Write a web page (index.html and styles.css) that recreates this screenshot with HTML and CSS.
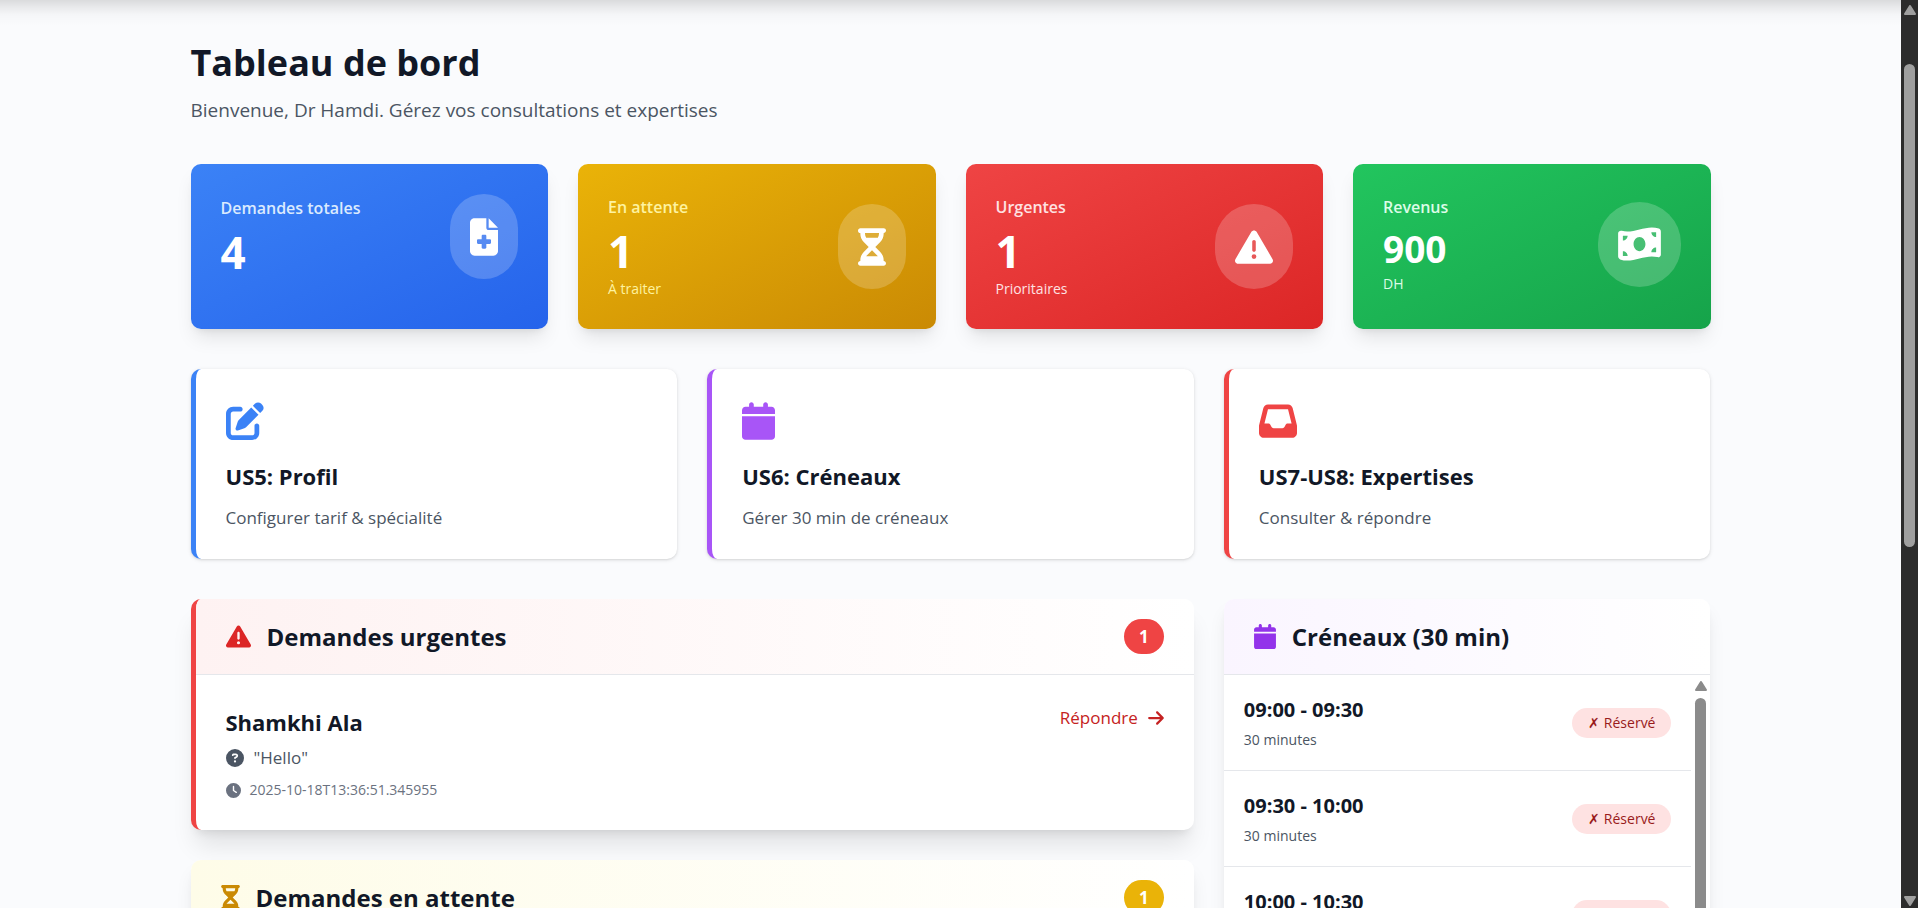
FILE: index.html
```html
<!DOCTYPE html>
<html lang="fr">
<head>
<meta charset="utf-8">
<title>Tableau de bord</title>
<link rel="stylesheet" href="styles.css">
</head>
<body>
<svg class="sprite" aria-hidden="true">
  <symbol id="file" viewBox="0 0 384 512"><path d="M64 0C28.7 0 0 28.7 0 64V448c0 35.3 28.7 64 64 64H320c35.3 0 64-28.7 64-64V160H256c-17.7 0-32-14.3-32-32V0H64zM256 0V128H384L256 0zM160 240c0-8.800 7.200-16 16-16h32c8.800 0 16 7.200 16 16v48h48c8.800 0 16 7.200 16 16v32c0 8.800-7.200 16-16 16H224v48c0 8.800-7.200 16-16 16H176c-8.800 0-16-7.200-16-16V352H112c-8.800 0-16-7.200-16-16V304c0-8.800 7.200-16 16-16h48V240z"/></symbol>
  <symbol id="hourglass" viewBox="0 0 384 512"><path d="M32 0C14.3 0 0 14.3 0 32S14.3 64 32 64V75c0 42.4 16.9 83.1 46.9 113.1L146.700 256 78.900 323.900C48.900 353.900 32 394.600 32 437v11c-17.700 0-32 14.300-32 32s14.300 32 32 32H64 320h32c17.700 0 32-14.300 32-32s-14.300-32-32-32V437c0-42.400-16.900-83.100-46.900-113.100L237.300 256l67.900-67.900c30-30 46.900-70.700 46.900-113.100V64c17.700 0 32-14.300 32-32s-14.300-32-32-32H320 64 32zM96 75V64H288V75c0 19-5.600 37.400-16 53H112c-10.300-15.600-16-34-16-53zm16 309c3.500-5.300 7.600-10.300 12.100-14.900L192 301.300l67.900 67.900c4.600 4.600 8.600 9.600 12.100 14.900H112z"/></symbol>
  <symbol id="warning" viewBox="0 0 512 512"><path d="M256 32c14.2 0 27.3 7.5 34.5 19.8l216 368c7.3 12.4 7.3 27.7 .2 40.1S486.300 480 472 480H40c-14.300 0-27.600-7.700-34.700-20.100s-7-27.800 .2-40.100l216-368C228.700 39.500 241.800 32 256 32zm0 128c-13.300 0-24 10.700-24 24V296c0 13.300 10.700 24 24 24s24-10.700 24-24V184c0-13.300-10.700-24-24-24zm32 224a32 32 0 1 0 -64 0 32 32 0 1 0 64 0z"/></symbol>
  <symbol id="money" viewBox="0 0 576 512"><path d="M0 112.500V422.300c0 18 10.100 35 27 41.300c87 32.500 174 10.300 261-11.900c79.800-20.300 159.600-40.700 239.300-18.900c23 6.300 48.700-9.500 48.700-33.400V89.700c0-18-10.100-35-27-41.300C462 15.900 375 38.100 288 60.300C208.200 80.600 128.400 100.900 48.700 79.100C25.600 72.800 0 88.600 0 112.500zM288 352c-44.200 0-80-43-80-96s35.800-96 80-96s80 43 80 96s-35.800 96-80 96zM64 352c35.300 0 64 28.700 64 64H64V352zm64-208c0 35.300-28.700 64-64 64V144h64zM512 304v64H448c0-35.300 28.700-64 64-64zM448 96h64v64c-35.300 0-64-28.700-64-64z"/></symbol>
  <symbol id="edit" viewBox="0 0 512 512"><path d="M471.600 21.700c-21.900-21.900-57.300-21.900-79.200 0L362.300 51.700l97.900 97.900 30.100-30.100c21.900-21.900 21.900-57.300 0-79.200L471.600 21.700zm-299.200 220c-6.100 6.100-10.800 13.600-13.500 21.900l-29.600 88.800c-2.900 8.600-.6 18.100 5.800 24.600s15.900 8.700 24.600 5.800l88.800-29.600c8.200-2.700 15.700-7.400 21.900-13.500L437.700 172.300 339.700 74.300 172.400 241.700zM96 64C43 64 0 107 0 160V416c0 53 43 96 96 96H352c53 0 96-43 96-96V320c0-17.700-14.300-32-32-32s-32 14.300-32 32v96c0 17.700-14.300 32-32 32H96c-17.700 0-32-14.300-32-32V160c0-17.700 14.300-32 32-32h96c17.700 0 32-14.300 32-32s-14.300-32-32-32H96z"/></symbol>
  <symbol id="calendar" viewBox="0 0 448 512"><path d="M96 32V64H48C21.500 64 0 85.500 0 112v48H448V112c0-26.500-21.500-48-48-48H352V32c0-17.700-14.300-32-32-32s-32 14.300-32 32V64H160V32c0-17.700-14.300-32-32-32S96 14.300 96 32zM448 192H0V464c0 26.500 21.500 48 48 48H400c26.500 0 48-21.500 48-48V192z"/></symbol>
  <symbol id="inbox" viewBox="0 0 512 512"><path d="M121 32C91.600 32 66 52 58.900 80.500L1.900 308.400C.6 313.500 0 318.700 0 323.900V416c0 35.300 28.700 64 64 64H448c35.300 0 64-28.700 64-64V323.900c0-5.200-.6-10.400-1.900-15.500l-57-227.900C446 52 420.400 32 391 32H121zm0 64H391l48 192H387.800c-12.100 0-23.200 6.800-28.600 17.700l-14.300 28.600c-5.400 10.800-16.500 17.700-28.600 17.700H195.800c-12.100 0-23.200-6.800-28.600-17.700l-14.300-28.600c-5.400-10.800-16.500-17.700-28.600-17.700H73L121 96z"/></symbol>
  <symbol id="question" viewBox="0 0 512 512"><path d="M256 512A256 256 0 1 0 256 0a256 256 0 1 0 0 512zM169.800 165.300c7.900-22.300 29.100-37.300 52.800-37.300h58.300c34.900 0 63.100 28.300 63.100 63.100c0 22.600-12.100 43.500-31.700 54.800L280 264.400c-.2 13-10.900 23.600-24 23.600c-13.300 0-24-10.700-24-24V250.500c0-8.600 4.600-16.500 12.100-20.800l44.300-25.400c4.700-2.700 7.600-7.700 7.600-13.100c0-8.400-6.800-15.100-15.100-15.100H222.600c-3.400 0-6.400 2.100-7.500 5.300l-.4 1.200c-4.400 12.500-18.200 19-30.600 14.600s-19-18.200-14.600-30.600l.4-1.200zM224 352a32 32 0 1 1 64 0 32 32 0 1 1 -64 0z"/></symbol>
  <symbol id="clock" viewBox="0 0 512 512"><path d="M256 0a256 256 0 1 1 0 512A256 256 0 1 1 256 0zM232 120V256c0 8 4 15.500 10.700 20l96 64c11 7.400 25.900 4.400 33.300-6.700s4.400-25.900-6.700-33.300L280 243.200V120c0-13.300-10.700-24-24-24s-24 10.700-24 24z"/></symbol>
  <symbol id="arrow" viewBox="0 0 448 512"><path d="M438.600 278.600c12.500-12.500 12.500-32.800 0-45.300l-160-160c-12.500-12.500-32.800-12.500-45.300 0s-12.500 32.800 0 45.300L338.800 224 32 224c-17.700 0-32 14.300-32 32s14.300 32 32 32l306.700 0L233.400 393.400c-12.500 12.500-12.500 32.800 0 45.300s32.800 12.500 45.300 0l160-160z"/></symbol>
  <symbol id="up" viewBox="0 0 12 10"><path d="M6 1L11 9H1Z" stroke="currentColor" stroke-width="2" stroke-linejoin="round"/></symbol>
  <symbol id="down" viewBox="0 0 12 10"><path d="M6 9L1 1H11Z" stroke="currentColor" stroke-width="2" stroke-linejoin="round"/></symbol>
</svg>

<div class="viewport">
  <main class="container">
    <header class="intro">
      <h1>Tableau de bord</h1>
      <p>Bienvenue, Dr Hamdi. Gérez vos consultations et expertises</p>
    </header>

    <section class="stats">
      <article class="stat blue">
        <div class="stat-row">
          <div><p class="label">Demandes totales</p><p class="value">4</p></div>
          <span class="bubble"><svg class="w28"><use href="#file"/></svg></span>
        </div>
      </article>
      <article class="stat yellow">
        <div class="stat-row">
          <div><p class="label">En attente</p><p class="value">1</p><p class="note">À traiter</p></div>
          <span class="bubble"><svg class="w28"><use href="#hourglass"/></svg></span>
        </div>
      </article>
      <article class="stat red">
        <div class="stat-row">
          <div><p class="label">Urgentes</p><p class="value">1</p><p class="note">Prioritaires</p></div>
          <span class="bubble"><svg class="w38"><use href="#warning"/></svg></span>
        </div>
      </article>
      <article class="stat green">
        <div class="stat-row">
          <div><p class="label">Revenus</p><p class="value small">900</p><p class="note">DH</p></div>
          <span class="bubble"><svg class="w43"><use href="#money"/></svg></span>
        </div>
      </article>
    </section>

    <section class="actions">
      <a class="action edge-blue" href="#profil">
        <svg class="w38"><use href="#edit"/></svg>
        <h3>US5: Profil</h3>
        <p>Configurer tarif &amp; spécialité</p>
      </a>
      <a class="action edge-purple" href="#creneaux">
        <svg class="w33"><use href="#calendar"/></svg>
        <h3>US6: Créneaux</h3>
        <p>Gérer 30 min de créneaux</p>
      </a>
      <a class="action edge-red" href="#expertises">
        <svg class="w38"><use href="#inbox"/></svg>
        <h3>US7-US8: Expertises</h3>
        <p>Consulter &amp; répondre</p>
      </a>
    </section>

    <section class="columns">
      <div class="requests">
        <article class="panel urgent">
          <header class="panel-head">
            <h2><svg class="w25"><use href="#warning"/></svg>Demandes urgentes</h2>
            <span class="count">1</span>
          </header>
          <div class="request">
            <div>
              <h3>Shamkhi Ala</h3>
              <p class="question"><svg><use href="#question"/></svg>"Hello"</p>
              <p class="date"><svg><use href="#clock"/></svg>2025-10-18T13:36:51.345955</p>
            </div>
            <a class="reply" href="#repondre">Répondre<svg><use href="#arrow"/></svg></a>
          </div>
        </article>
        <article class="panel pending">
          <header class="panel-head">
            <h2><svg class="w19"><use href="#hourglass"/></svg>Demandes en attente</h2>
            <span class="count">1</span>
          </header>
        </article>
      </div>

      <aside class="panel slots" id="creneaux">
        <header class="panel-head">
          <h2><svg class="w22"><use href="#calendar"/></svg>Créneaux (30 min)</h2>
        </header>
        <div class="slot-area">
          <ul>
            <li><div><p class="time">09:00 - 09:30</p><p class="duration">30 minutes</p></div><span class="tag">✗ Réservé</span></li>
            <li><div><p class="time">09:30 - 10:00</p><p class="duration">30 minutes</p></div><span class="tag">✗ Réservé</span></li>
            <li><div><p class="time">10:00 - 10:30</p><p class="duration">30 minutes</p></div><span class="tag">✗ Réservé</span></li>
          </ul>
          <div class="scroll inner" aria-hidden="true"><svg><use href="#up"/></svg><span class="thumb"></span></div>
        </div>
      </aside>
    </section>
  </main>
</div>
<div class="scroll outer" aria-hidden="true">
  <svg><use href="#up"/></svg>
  <div class="track"><span class="thumb"></span></div>
  <svg><use href="#down"/></svg>
</div>
</body>
</html>
```

FILE: styles.css
```css
* { box-sizing: border-box; margin: 0; padding: 0; }
body {
  display: flex;
  height: 100vh;
  overflow: hidden;
  background: #fafbfd;
  color: #111827;
  font-family: "Open Sans", "Noto Sans", sans-serif;
}
a { color: inherit; text-decoration: none; }
ul { list-style: none; }
svg { display: block; fill: currentColor; flex: none; }
.sprite { position: absolute; width: 0; height: 0; }

.viewport {
  flex: 1;
  min-width: 0;
  overflow: hidden;
  background: linear-gradient(rgba(0, 0, 0, .13), rgba(0, 0, 0, .07) 7px, rgba(0, 0, 0, .02) 15px, transparent 26px) top / 100% 26px no-repeat;
}
.container { max-width: 1600px; margin: 0 auto; padding: 40px 40px 0; }
.intro { margin-bottom: 39px; }
.intro h1 { font-size: 36px; line-height: 45px; }
.intro p { margin-top: 10px; font-size: 19px; line-height: 30px; color: #4b5563; }

.w19 { width: 19px; height: 25px; }
.w22 { width: 22px; height: 25px; }
.w25 { width: 25px; height: 25px; }
.w28 { width: 28px; height: 38px; }
.w33 { width: 33px; height: 38px; }
.w38 { width: 38px; height: 38px; }
.w43 { width: 43px; height: 38px; }

.stats { display: grid; grid-template-columns: repeat(4, 1fr); gap: 30px; margin-bottom: 40px; }
.stat {
  padding: 30px;
  border-radius: 10px;
  box-shadow: 0 12px 19px -4px rgba(0, 0, 0, .1), 0 5px 8px -5px rgba(0, 0, 0, .1);
}
.stat-row { display: flex; justify-content: space-between; align-items: center; }
.label { font-size: 16px; line-height: 27px; font-weight: 600; }
.value { margin-top: 4px; font-size: 44px; line-height: 52px; font-weight: 700; color: #fff; }
.value.small { font-size: 37px; line-height: 47px; }
.note { margin-top: 2px; font-size: 14px; line-height: 20px; }
.bubble {
  display: flex;
  align-items: center;
  height: 85px;
  padding: 0 20px;
  border-radius: 999px;
  background: rgba(255, 255, 255, .2);
  color: #fff;
}
.blue { background: linear-gradient(to bottom right, #3b82f6, #2563eb); color: #dbeafe; }
.yellow { background: linear-gradient(to bottom right, #eab308, #ca8a04); color: #fef3a0; }
.red { background: linear-gradient(to bottom right, #ef4444, #dc2626); color: #fee2e2; }
.green { background: linear-gradient(to bottom right, #22c55e, #16a34a); color: #dcfce7; }

.actions { display: grid; grid-template-columns: repeat(3, 1fr); gap: 30px; margin-bottom: 40px; }
.action {
  padding: 33px 30px 29px;
  border-left: 5px solid;
  border-radius: 10px;
  background: #fff;
  box-shadow: 0 1px 4px rgba(0, 0, 0, .1), 0 1px 2px rgba(0, 0, 0, .08);
}
.action h3 { margin-top: 19px; font-size: 22px; line-height: 35px; color: #111827; }
.action p { margin-top: 11px; font-size: 17px; line-height: 25px; color: #4b5563; }
.edge-blue { color: #3b82f6; }
.edge-purple { color: #a855f7; }
.edge-red { color: #ef4444; }

.columns { display: grid; grid-template-columns: repeat(3, 1fr); gap: 30px; align-items: start; }
.requests { grid-column: span 2; display: grid; gap: 30px; }
.panel {
  overflow: hidden;
  border-radius: 10px;
  background: #fff;
  box-shadow: 0 12px 19px -4px rgba(0, 0, 0, .1), 0 5px 8px -5px rgba(0, 0, 0, .1);
}
.panel-head {
  display: flex;
  justify-content: space-between;
  align-items: center;
  padding: 20px 30px;
  border-bottom: 1px solid #e5e7eb;
}
.panel-head h2 { display: flex; align-items: center; gap: 16px; font-size: 24px; line-height: 35px; }
.count {
  min-width: 40px;
  border-radius: 999px;
  color: #fff;
  font-size: 17px;
  font-weight: 700;
  line-height: 35px;
  text-align: center;
}
.urgent { border-left: 5px solid #ef4444; box-shadow: 0 20px 25px -5px rgba(0, 0, 0, .1), 0 8px 10px -6px rgba(0, 0, 0, .1); }
.urgent .panel-head { background: linear-gradient(to right, #fef2f2, #fff); }
.urgent .count { background: #ef4444; }
.urgent h2 svg { color: #dc2626; }
.pending { min-height: 240px; }
.pending .panel-head { background: linear-gradient(to right, #fefce8, #fff); }
.pending .count { background: #eab308; }
.pending h2 svg { color: #ca8a04; }
.slots .panel-head { background: linear-gradient(to right, #faf5ff, #fff); }
.slots h2 svg { color: #9333ea; }

.request { display: flex; justify-content: space-between; align-items: flex-start; padding: 30px; }
.request h3 { font-size: 22px; line-height: 35px; }
.question, .date { display: flex; align-items: center; }
.question { gap: 10px; margin-top: 5px; font-size: 17px; line-height: 25px; color: #4b5563; }
.question svg { width: 18px; height: 18px; }
.date { gap: 9px; margin-top: 10px; font-size: 14px; line-height: 20px; color: #6b7280; }
.date svg { width: 15px; height: 15px; }
.reply { display: flex; align-items: center; gap: 10px; font-size: 17px; line-height: 25px; font-weight: 500; color: #c52222; }
.reply svg { width: 16px; height: 18px; }

.slot-area { display: flex; }
.slot-area ul { flex: 1; }
.slot-area li {
  display: flex;
  justify-content: space-between;
  align-items: center;
  padding: 20px;
  border-bottom: 1px solid #e5e7eb;
}
.time { font-size: 20px; line-height: 30px; font-weight: 700; }
.duration { margin-top: 5px; font-size: 14px; line-height: 20px; color: #4b5563; }
.tag {
  padding: 0 16px;
  border-radius: 999px;
  background: #fee2e2;
  color: #991b1b;
  font-size: 14px;
  line-height: 30px;
  font-weight: 500;
}

.scroll { display: flex; flex-direction: column; align-items: center; flex: none; }
.scroll svg { width: 12px; height: 10px; }
.thumb { width: 11px; border-radius: 6px; background: currentColor; }
.inner { width: 19px; padding-top: 6px; gap: 7px; color: #8b8b8b; }
.inner .thumb { flex: 1; }
.outer { width: 17px; padding: 5px 0 2px; background: #2c2c2c; color: #9f9f9f; }
.track { display: flex; flex: 1; padding-top: 49px; }
.track .thumb { height: 58%; }
```
